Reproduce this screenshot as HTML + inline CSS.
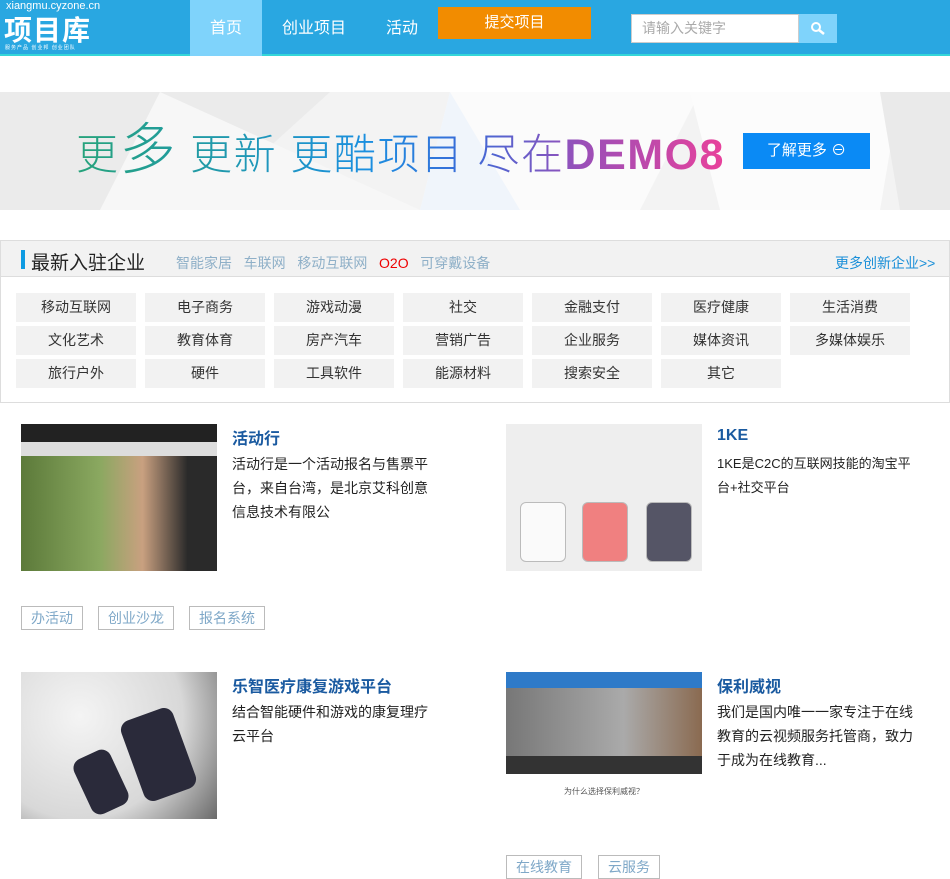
<!DOCTYPE html>
<html><head><meta charset="utf-8"><style>
*{margin:0;padding:0;box-sizing:border-box}
body{width:950px;height:864px;overflow:hidden;background:#fff;font-family:"Liberation Sans","Noto Sans CJK SC",sans-serif;position:relative}
.a{position:absolute}
.hdr{left:0;top:0;width:950px;height:56px;background:#29a7e1;border-bottom:2px solid #34d6d8}
.nav{top:0;height:56px;line-height:58px;color:#fff;font-size:16px;text-align:center}
.tag{position:absolute;width:120px;height:29px;line-height:29px;background:#f2f2f2;color:#333;font-size:14px;text-align:center}
.t{font-size:16px;font-weight:bold;color:#1a5aa0}
.d{font-size:14px;line-height:24px;color:#222;width:200px}
.lb{position:absolute;height:24px;line-height:22px;border:1px solid #bbb;color:#7fa8c8;font-size:14px;padding:0 9px}
</style></head><body>
<div class="a hdr"></div>
<div class="a" style="left:6px;top:0;color:#fff;font-size:11px">xiangmu.cyzone.cn</div>
<div class="a" style="left:4px;top:9px;color:#fff;font-size:28px;font-weight:bold;letter-spacing:1px">项目库</div>
<div class="a" style="left:5px;top:44px;color:#fff;font-size:5px;letter-spacing:1px">服务产品 创业邦 创业团队</div>
<div class="a nav" style="left:190px;width:72px;background:#7fd3fb">首页</div>
<div class="a nav" style="left:270px;width:88px">创业项目</div>
<div class="a nav" style="left:372px;width:60px">活动</div>
<div class="a" style="left:438px;top:7px;width:153px;height:32px;background:#f28c00;color:#fff;font-size:15px;text-align:center;line-height:32px">提交项目</div>
<div class="a" style="left:631px;top:14px;width:168px;height:29px;background:#fff;border:1px solid #ccc;color:#aaa;font-size:14px;line-height:27px;padding-left:10px">请输入关键字</div>
<div class="a" style="left:799px;top:14px;width:38px;height:29px;background:#7fd3fb"><svg width="38" height="29"><circle cx="17" cy="13" r="4" stroke="#fff" stroke-width="2" fill="none"/><line x1="20" y1="16" x2="25" y2="20" stroke="#fff" stroke-width="2.5"/></svg></div>

<div class="a" style="left:0;top:92px;width:950px;height:118px;background:#f3f3f3;overflow:hidden">
<svg width="950" height="118" style="position:absolute;left:0;top:0"><polygon points="0,0 330,0 200,118 0,118" fill="#ebebeb"/><polygon points="160,0 420,118 100,118" fill="#f7f7f7"/><polygon points="450,0 700,0 640,118 420,118" fill="#fbfbfb"/><polygon points="450,0 520,118 420,118" fill="#f0f5fb"/><polygon points="690,0 900,0 880,118 720,118" fill="#fcfcfc"/><polygon points="880,0 950,0 950,118 900,118" fill="#eaeaea"/></svg>
<div class="a" style="left:76px;top:18px;font-size:42px;font-weight:300;letter-spacing:1.5px;line-height:80px;white-space:nowrap;background:linear-gradient(90deg,#26a37a,#1a8fe0 45%,#3a6bd8 60%,#9a4fb8 78%,#e9419b);-webkit-background-clip:text;background-clip:text;color:transparent">更<span style="font-size:56px">多</span> 更新 更酷项目 尽在<b style="font-family:'Liberation Sans';font-size:43px;font-weight:bold">DEMO8</b></div>
<div class="a" style="left:743px;top:41px;width:127px;height:36px;background:#0a8af5;color:#fff;font-size:15px;line-height:36px;text-align:center">了解更多 ⊖</div>
</div>

<div class="a" style="left:0;top:240px;width:950px;height:163px;border:1px solid #ddd"></div>
<div class="a" style="left:1px;top:241px;width:948px;height:36px;background:#f2f2f2;border-bottom:1px solid #ddd"></div>
<div class="a" style="left:21px;top:250px;width:4px;height:19px;background:#0e9be2"></div>
<div class="a" style="left:31px;top:248px;font-size:19px;color:#222">最新入驻企业</div>
<div class="a" style="left:176px;top:253px;font-size:14px;color:#8fb0c8"><span>智能家居</span>&nbsp;&nbsp; <span>车联网</span>&nbsp;&nbsp; <span>移动互联网</span>&nbsp;&nbsp; <span style="color:#e00">O2O</span>&nbsp;&nbsp; <span>可穿戴设备</span></div>
<div class="a" style="left:835px;top:253px;font-size:14px;color:#1a8fd8">更多创新企业&gt;&gt;</div>

<div class="tag" style="left:16px;top:293px">移动互联网</div><div class="tag" style="left:145px;top:293px">电子商务</div><div class="tag" style="left:274px;top:293px">游戏动漫</div><div class="tag" style="left:403px;top:293px">社交</div><div class="tag" style="left:532px;top:293px">金融支付</div><div class="tag" style="left:661px;top:293px">医疗健康</div><div class="tag" style="left:790px;top:293px">生活消费</div>
<div class="tag" style="left:16px;top:326px">文化艺术</div><div class="tag" style="left:145px;top:326px">教育体育</div><div class="tag" style="left:274px;top:326px">房产汽车</div><div class="tag" style="left:403px;top:326px">营销广告</div><div class="tag" style="left:532px;top:326px">企业服务</div><div class="tag" style="left:661px;top:326px">媒体资讯</div><div class="tag" style="left:790px;top:326px">多媒体娱乐</div>
<div class="tag" style="left:16px;top:359px">旅行户外</div><div class="tag" style="left:145px;top:359px">硬件</div><div class="tag" style="left:274px;top:359px">工具软件</div><div class="tag" style="left:403px;top:359px">能源材料</div><div class="tag" style="left:532px;top:359px">搜索安全</div><div class="tag" style="left:661px;top:359px">其它</div>

<div class="a" style="left:21px;top:424px;width:196px;height:147px;background:linear-gradient(90deg,#5c7a3a,#8aa860 40%,#c9a080 62%,#2a2a2a 85%);"><div style="height:18px;background:#222"></div><div style="height:14px;background:#ddd"></div></div>
<div class="a" style="left:506px;top:424px;width:196px;height:147px;background:#eeeeee"><div class="a" style="left:14px;top:78px;width:46px;height:60px;border:1px solid #bbb;border-radius:6px;background:#fafafa"></div><div class="a" style="left:76px;top:78px;width:46px;height:60px;border:1px solid #bbb;border-radius:6px;background:#f08080"></div><div class="a" style="left:140px;top:78px;width:46px;height:60px;border:1px solid #bbb;border-radius:6px;background:#556"></div></div>
<div class="a t" style="left:232px;top:425px">活动行</div>
<div class="a d" style="left:232px;top:452px">活动行是一个活动报名与售票平台，来自台湾，是北京艾科创意信息技术有限公</div>
<div class="a t" style="left:717px;top:427px">1KE</div>
<div class="a d" style="left:717px;top:452px;font-size:13px;width:198px">1KE是C2C的互联网技能的淘宝平台+社交平台</div>
<div class="lb" style="left:21px;top:606px">办活动</div><div class="lb" style="left:98px;top:606px">创业沙龙</div><div class="lb" style="left:189px;top:606px">报名系统</div>

<div class="a" style="left:21px;top:672px;width:196px;height:147px;background:radial-gradient(circle at 30% 30%,#f4f4f4,#d8d8d8 60%,#6a6a6a)"><div class="a" style="left:110px;top:40px;width:55px;height:85px;background:#2a2a3a;transform:rotate(-20deg);border-radius:10px"></div><div class="a" style="left:60px;top:80px;width:40px;height:60px;background:#2a2a3a;transform:rotate(-25deg);border-radius:10px"></div></div>
<div class="a" style="left:506px;top:672px;width:196px;height:147px;background:#fff"><div style="height:16px;background:#2e7ac8"></div><div style="height:68px;background:linear-gradient(90deg,#777,#aaa 60%,#8a6a50)"></div><div style="height:18px;background:#333"></div><div style="font-size:8px;color:#555;text-align:center;margin-top:12px">为什么选择保利威视？</div></div>
<div class="a t" style="left:232px;top:673px">乐智医疗康复游戏平台</div>
<div class="a d" style="left:232px;top:700px">结合智能硬件和游戏的康复理疗云平台</div>
<div class="a t" style="left:717px;top:673px">保利威视</div>
<div class="a d" style="left:717px;top:700px">我们是国内唯一一家专注于在线教育的云视频服务托管商，致力于成为在线教育...</div>
<div class="lb" style="left:506px;top:855px">在线教育</div><div class="lb" style="left:598px;top:855px">云服务</div>
</body></html>
